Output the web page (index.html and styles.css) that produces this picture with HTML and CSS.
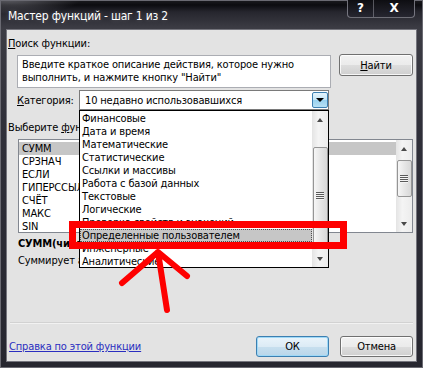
FILE: index.html
```html
<!DOCTYPE html>
<html lang="ru">
<head>
<meta charset="utf-8">
<title>Мастер функций</title>
<link rel="stylesheet" href="styles.css">
</head>
<body>
<div class="window">
  <div class="titlebar">
    <span class="title">Мастер функций - шаг 1 из 2</span>
    <div class="caption-btns">
      <span class="cb help">?</span>
      <span class="cb close">X</span>
    </div>
  </div>
  <div class="client">
    <div class="label first"><u>П</u>оиск функции:</div>
    <div class="search-row">
      <div class="search-box">Введите краткое описание действия, которое нужно выполнить, и нажмите кнопку "Найти"</div>
      <button class="btn find"><u>Н</u>айти</button>
    </div>
    <div class="cat-row">
      <span class="cat-label"><u>К</u>атегория:</span>
      <div class="select">
        <span class="select-text">10 недавно использовавшихся</span>
        <span class="drop-btn"><span class="tri-down"></span></span>
        <div class="dropdown">
          <ul class="items">
            <li>Финансовые</li>
            <li>Дата и время</li>
            <li>Математические</li>
            <li>Статистические</li>
            <li>Ссылки и массивы</li>
            <li>Работа с базой данных</li>
            <li>Текстовые</li>
            <li>Логические</li>
            <li>Проверка свойств и значений</li>
            <li class="hl">Определенные пользователем</li>
            <li>Инженерные</li>
            <li>Аналитические</li>
          </ul>
          <div class="scrollbar">
            <span class="sb-btn"><span class="tri-up"></span></span>
            <div class="track"><div class="thumb dd-thumb"><span class="grip"></span></div></div>
            <span class="sb-btn"><span class="tri-down small"></span></span>
          </div>
        </div>
      </div>
    </div>
    <div class="label second">Выберите <u>ф</u>ункцию:</div>
    <div class="func-list">
      <ul class="items func-items">
        <li class="sel">СУММ</li>
        <li>СРЗНАЧ</li>
        <li>ЕСЛИ</li>
        <li>ГИПЕРССЫЛКА</li>
        <li>СЧЁТ</li>
        <li>МАКС</li>
        <li>SIN</li>
      </ul>
      <div class="scrollbar">
        <span class="sb-btn"><span class="tri-up"></span></span>
        <div class="track"><div class="thumb fl-thumb"><span class="grip"></span></div></div>
        <span class="sb-btn"><span class="tri-down small"></span></span>
      </div>
    </div>
    <div class="sig">СУММ(число1;число2;...)</div>
    <div class="desc">Суммирует аргументы.</div>
    <div class="sep"></div>
    <div class="bottom-row">
      <a class="help-link" href="#">Справка по этой функции</a>
      <div class="btns">
        <button class="btn ok">ОК</button>
        <button class="btn">Отмена</button>
      </div>
    </div>
  </div>
  <svg class="annot" width="423" height="368" viewBox="0 0 423 368">
    <rect x="72.5" y="224.5" width="271" height="21" fill="none" stroke="#fe0000" stroke-width="7"/>
    <path d="M158 252 L167 310 M122 283 L158 252 L187 276" fill="none" stroke="#fe0000" stroke-width="6" stroke-linecap="round" stroke-linejoin="round"/>
  </svg>
</div>
</body>
</html>
```

FILE: styles.css
```css
* { box-sizing: border-box; }
html, body { margin: 0; padding: 0; }
body {
  width: 423px;
  height: 368px;
  overflow: hidden;
  background: #1c1c24;
  font-family: Tahoma, "DejaVu Sans Condensed", "DejaVu Sans", sans-serif;
  font-size: 11px;
  letter-spacing: -0.15px;
  color: #000;
}
ul { list-style: none; margin: 0; padding: 0; }

.window {
  position: relative;
  width: 423px;
  height: 368px;
  display: flex;
  flex-direction: column;
  background:
    radial-gradient(ellipse 70px 14px at 10px 0px, rgba(130,130,138,0.6), rgba(130,130,138,0) 100%),
    linear-gradient(to bottom, #1c1c20 0px, #0c0c10 5px, #26262e 12px, #3c3c44 28px, #30303a 120px, #26262f 100%);
  box-shadow: inset 0 0 0 1px #6a6a72;
}

.titlebar {
  height: 29px;
  display: flex;
  align-items: flex-start;
  padding-left: 8px;
}
.title {
  color: #fff;
  font-size: 12px;
  line-height: 13px;
  margin-top: 10px;
  letter-spacing: -0.2px;
  text-shadow: 0 0 5px rgba(255,255,255,0.2);
}
.caption-btns {
  margin-left: auto;
  margin-right: 8px;
  width: 68px;
  height: 18px;
  display: flex;
  border: 1px solid rgba(190,190,200,0.55);
  border-top: none;
  border-radius: 0 0 4px 4px;
  background: linear-gradient(to bottom, #0e0e12, #262630);
}
.cb {
  color: #fff;
  font-weight: bold;
  font-size: 12px;
  line-height: 17px;
  text-align: center;
  font-family: "DejaVu Sans", sans-serif;
}
.help { width: 25px; }
.close { flex: 1; border-left: 1px solid rgba(190,190,200,0.4); }

.client {
  margin: 0 6px;
  height: 333px;
  background: #e3e3e3;
  border: 1px solid #74747c;
  display: flex;
  flex-direction: column;
  line-height: 13px;
}

.label { padding-left: 1px; height: 13px; }
.label.first { margin-top: 7px; }
.label.second { margin-top: 11px; }

.search-row {
  margin-top: 4px;
  margin-left: 10px;
  display: flex;
  align-items: flex-start;
  gap: 8px;
  height: 34px;
}
.search-box {
  margin-top: 1px;
  width: 314px;
  height: 33px;
  background: #fff;
  border: 1px solid #abadb3;
  padding: 2px 3px 0 4px;
}

.btn {
  font-family: inherit;
  font-size: 11px;
  letter-spacing: inherit;
  color: #000;
  width: 74px;
  height: 22px;
  padding: 0;
  border: 1px solid #707070;
  border-radius: 3px;
  background: linear-gradient(to bottom, #f2f2f2 0%, #ebebeb 50%, #dddddd 51%, #cfcfcf 100%);
  box-shadow: inset 0 0 0 1px rgba(255,255,255,0.8);
}
.btn.ok {
  border-color: #3c7fb1;
  background: linear-gradient(to bottom, #eaf4fb 0%, #dcebf5 50%, #c7dfee 51%, #b9d6ea 100%);
  box-shadow: inset 0 0 0 1px #9fd9f7;
}

.cat-row {
  margin-top: 2px;
  margin-left: 10px;
  display: flex;
  align-items: center;
  height: 20px;
}
.cat-label { width: 62px; }
.select {
  position: relative;
  width: 250px;
  height: 20px;
  background: #fff;
  border: 1px solid #7a7a7a;
  display: flex;
  align-items: center;
  padding-left: 5px;
  z-index: 2;
}
.select-text { flex: 1; }
.drop-btn {
  width: 16px;
  height: 16px;
  border: 1px solid #3c7fb1;
  border-radius: 2px;
  background: linear-gradient(to bottom, #e5f4fc 0%, #c4e5f6 50%, #98d1ef 51%, #b7e0f4 100%);
  display: flex;
  align-items: center;
  justify-content: center;
}
.tri-down {
  width: 0; height: 0;
  border-left: 4px solid transparent;
  border-right: 4px solid transparent;
  border-top: 4px solid #000;
}
.tri-down.small {
  border-left-width: 3.5px;
  border-right-width: 3.5px;
  border-top-color: #4a4a4a;
}
.tri-up {
  width: 0; height: 0;
  border-left: 3.5px solid transparent;
  border-right: 3.5px solid transparent;
  border-bottom: 4px solid #4a4a4a;
}

.dropdown {
  position: absolute;
  left: -1px;
  top: 19px;
  width: 250px;
  height: 158px;
  background: #fff;
  border: 1px solid #000;
  display: flex;
}
.items { flex: 1; padding-top: 1px; }
.items li {
  height: 13px;
  line-height: 13px;
  padding-left: 2px;
  white-space: nowrap;
  overflow: hidden;
}
.items li.hl {
  background: #c6c6c6;
  outline: 1px dotted #505050;
  outline-offset: -1px;
}

.scrollbar {
  width: 16px;
  display: flex;
  flex-direction: column;
  background: linear-gradient(to right, #e4e4e4, #f4f4f4 40%, #ececec);
}
.sb-btn {
  height: 17px;
  display: flex;
  align-items: center;
  justify-content: center;
  flex: none;
}
.track { flex: 1; display: flex; flex-direction: column; align-items: center; }
.thumb {
  width: 15px;
  border: 1px solid #959595;
  border-radius: 2px;
  background: linear-gradient(to right, #f6f6f6, #e6e6e6 50%, #d8d8d8);
  display: flex;
  align-items: center;
  justify-content: center;
}
.dd-thumb { margin-top: 19px; height: 98px; }
.fl-thumb { margin-top: 3px; height: 37px; }
.grip {
  width: 8px;
  height: 8px;
  background: repeating-linear-gradient(to bottom, #5a5a5a 0px, #5a5a5a 1px, #f4f4f4 1px, #f4f4f4 2px);
}

.func-list {
  margin-top: 5px;
  margin-left: 11px;
  width: 395px;
  height: 94px;
  background: #fff;
  border: 1px solid #828790;
  display: flex;
}
.func-items { padding-top: 2px; }
.func-items li { padding-left: 3px; }
.func-items li.sel { background: #c6c6c6; }

.sig {
  margin-top: 4px;
  margin-left: 11px;
  font-weight: bold;
  height: 13px;
}
.desc {
  margin-top: 4px;
  margin-left: 11px;
  height: 13px;
}
.sep {
  margin-top: 55px;
  margin-left: 3px;
  margin-right: 3px;
  height: 2px;
  border-top: 1px solid #d2d2d2;
  border-bottom: 1px solid #f2f2f2;
}
.bottom-row {
  margin-top: 12px;
  margin-left: 2px;
  margin-right: 3px;
  height: 21px;
  display: flex;
  align-items: center;
}
.help-link {
  color: #2a2ec0;
  text-decoration: underline;
}
.btns {
  margin-left: auto;
  display: flex;
  gap: 11px;
}
.btns .btn { width: 73px; height: 21px; }

.annot {
  position: absolute;
  left: 0;
  top: 0;
  pointer-events: none;
  z-index: 5;
}
```
